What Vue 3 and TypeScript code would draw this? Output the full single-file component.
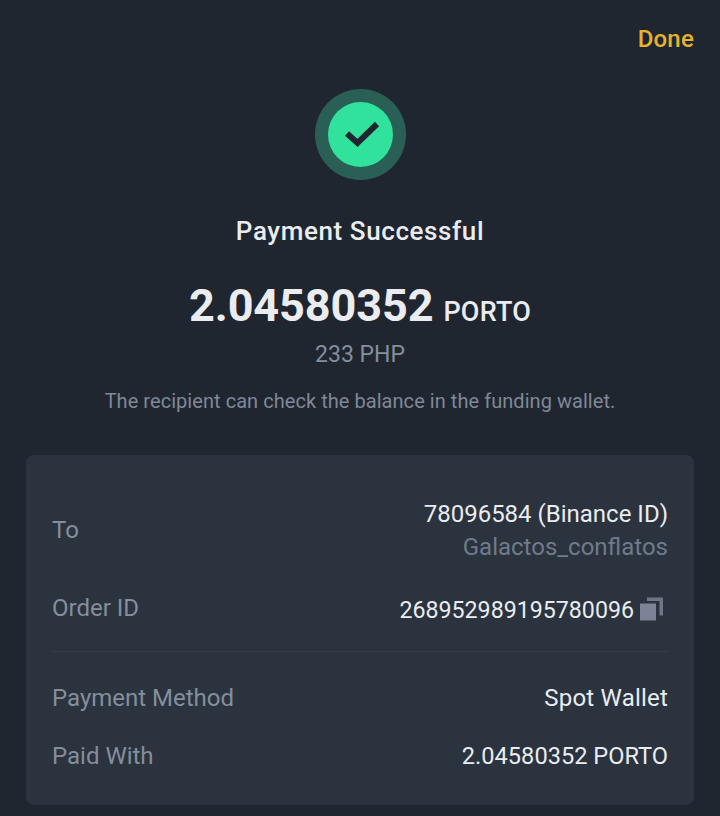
<script setup lang="ts">
type Row = { label: string; value: string; sub?: string; copy?: boolean; size?: string };

const topRows: Row[] = [
  { label: "To", value: "78096584 (Binance ID)", sub: "Galactos_conflatos" },
  { label: "Order ID", value: "268952989195780096", copy: true, size: "id" },
];

const bottomRows: Row[] = [
  { label: "Payment Method", value: "Spot Wallet", size: "method" },
  { label: "Paid With", value: "2.04580352 PORTO", size: "num" },
];
</script>

<template>
  <div class="page">
    <div class="top-bar">
      <span class="done">Done</span>
    </div>

    <div class="status">
      <svg class="status-icon" viewBox="0 0 91 91" width="91" height="91">
        <circle cx="45.5" cy="45.5" r="45.5" fill="#2a5f55" />
        <circle cx="45.5" cy="45.5" r="32.5" fill="#31e29c" />
        <path d="M32 44.5 L42.5 54 L62 35" fill="none" stroke="#1f2630" stroke-width="6" />
      </svg>
      <div class="title">Payment Successful</div>
      <div class="amount">
        <span class="amount-num">2.04580352</span>
        <span class="amount-unit">PORTO</span>
      </div>
      <div class="fiat">233 PHP</div>
      <div class="note">The recipient can check the balance in the funding wallet.</div>
    </div>

    <div class="card">
      <div class="group group-top">
        <div v-for="r in topRows" :key="r.label" class="row">
          <span class="label">{{ r.label }}</span>
          <div class="right">
            <div class="value" :class="r.size">
              {{ r.value }}
              <svg v-if="r.copy" class="copy" viewBox="0 0 24 24" width="24" height="25">
                <path d="M8 1 H24 V19 H20.5 V4.5 H8 Z" fill="#6f7687" />
                <rect x="1" y="7" width="16" height="17" fill="#7c8396" />
              </svg>
            </div>
            <div v-if="r.sub" class="sub">{{ r.sub }}</div>
          </div>
        </div>
      </div>
      <div class="divider"></div>
      <div class="group group-bottom">
        <div v-for="r in bottomRows" :key="r.label" class="row">
          <span class="label">{{ r.label }}</span>
          <div class="right">
            <div class="value" :class="r.size">{{ r.value }}</div>
          </div>
        </div>
      </div>
    </div>
  </div>
</template>

<style>
body {
  background: #1f2630;
}
</style>

<style scoped>
.page {
  width: 720px;
  height: 816px;
  box-sizing: border-box;
  background: #1f2630;
  font-family: Roboto, "Liberation Sans", sans-serif;
  overflow: hidden;
  padding: 0 26px;
}

.top-bar {
  display: flex;
  justify-content: flex-end;
  height: 89px;
  padding-top: 25px;
  box-sizing: border-box;
}

.done {
  color: #e6b32e;
  font-size: 24px;
  line-height: 28px;
  font-weight: 500;
  letter-spacing: 0.2px;
}

.status {
  display: flex;
  flex-direction: column;
  align-items: center;
}

.status-icon {
  display: block;
}

.title {
  margin-top: 35px;
  color: #eaecef;
  font-size: 26px;
  line-height: 32px;
  font-weight: 500;
  letter-spacing: 0.6px;
}

.amount {
  margin-top: 34px;
  display: flex;
  align-items: baseline;
  gap: 10px;
  color: #eaecef;
  height: 50px;
}

.amount-num {
  font-size: 45px;
  line-height: 50px;
  font-weight: 700;
  letter-spacing: -0.1px;
}

.amount-unit {
  font-size: 27px;
  font-weight: 500;
  letter-spacing: 0.2px;
  margin-bottom: 1px;
}

.fiat {
  margin-top: 10px;
  color: #848e9c;
  font-size: 23px;
  line-height: 28px;
}

.note {
  margin-top: 19px;
  color: #7f8897;
  font-size: 20px;
  line-height: 26px;
  letter-spacing: 0.05px;
}

.card {
  margin-top: 41px;
  height: 350px;
  box-sizing: border-box;
  background: #2b333f;
  border-radius: 8px;
  padding: 0 26px;
}

.group-top {
  padding-top: 43px;
  display: flex;
  flex-direction: column;
  gap: 29px;
}

.group-bottom {
  padding-top: 30px;
  display: flex;
  flex-direction: column;
  gap: 26px;
}

.divider {
  height: 1px;
  background: #343c49;
  margin-top: 25px;
}

.row {
  display: flex;
  justify-content: space-between;
  align-items: center;
}

.label {
  color: #848e9c;
  font-size: 24px;
  line-height: 29px;
  margin-bottom: 3px;
}

.group-bottom .label {
  line-height: 32px;
  margin-bottom: 0;
}

.right {
  text-align: right;
}

.value {
  color: #eaecef;
  font-size: 24px;
  line-height: 32px;
  display: flex;
  align-items: center;
  justify-content: flex-end;
  gap: 5px;
}

.value.id {
  font-size: 23.2px;
}

.value.num {
  font-size: 23.6px;
}

.value.method {
  letter-spacing: 0.2px;
}

.sub {
  color: #707a8a;
  font-size: 24px;
  line-height: 35px;
}

.copy {
  display: block;
  margin-right: 5px;
  margin-top: -4px;
}
</style>
